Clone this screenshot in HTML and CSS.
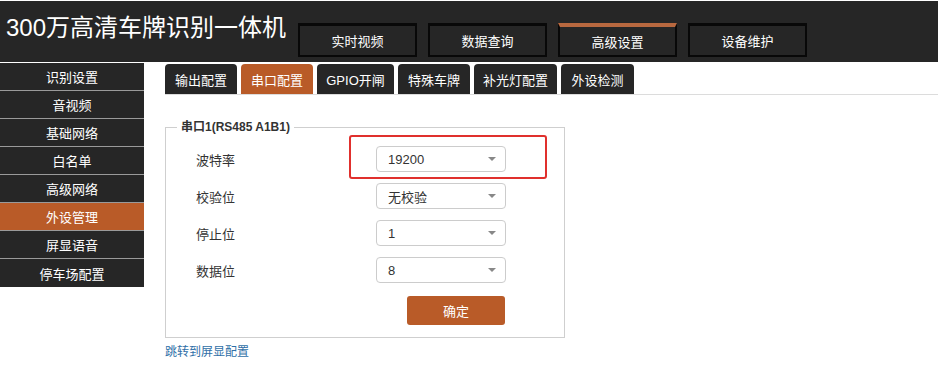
FILE: index.html
```html
<!DOCTYPE html>
<html lang="zh">
<head>
<meta charset="utf-8">
<title>300万高清车牌识别一体机</title>
<link rel="stylesheet" href="styles.css">
</head>
<body>
<header class="topbar">
  <h1 class="title">300万高清车牌识别一体机</h1>
  <nav class="mainnav">
    <a class="navbtn">实时视频</a>
    <a class="navbtn">数据查询</a>
    <a class="navbtn active">高级设置</a>
    <a class="navbtn">设备维护</a>
  </nav>
</header>
<div class="main">
  <aside class="sidebar">
    <a class="sideitem">识别设置</a>
    <a class="sideitem">音视频</a>
    <a class="sideitem">基础网络</a>
    <a class="sideitem">白名单</a>
    <a class="sideitem">高级网络</a>
    <a class="sideitem active">外设管理</a>
    <a class="sideitem">屏显语音</a>
    <a class="sideitem">停车场配置</a>
  </aside>
  <section class="content">
    <div class="tabs">
      <a class="tab w72">输出配置</a>
      <a class="tab w72 active">串口配置</a>
      <a class="tab w77">GPIO开闸</a>
      <a class="tab w72">特殊车牌</a>
      <a class="tab w83">补光灯配置</a>
      <a class="tab w73">外设检测</a>
    </div>
    <fieldset class="panel">
      <legend class="legend">串口1(RS485 A1B1)</legend>
      <div class="rows">
        <div class="row">
          <span class="label">波特率</span>
          <div class="select"><span>19200</span><i class="caret"></i></div>
        </div>
        <div class="row">
          <span class="label">校验位</span>
          <div class="select"><span>无校验</span><i class="caret"></i></div>
        </div>
        <div class="row">
          <span class="label">停止位</span>
          <div class="select"><span>1</span><i class="caret"></i></div>
        </div>
        <div class="row">
          <span class="label">数据位</span>
          <div class="select"><span>8</span><i class="caret"></i></div>
        </div>
        <div class="btnrow"><button class="okbtn">确定</button></div>
      </div>
      <div class="highlight"></div>
    </fieldset>
    <a class="link">跳转到屏显配置</a>
  </section>
</div>
</body>
</html>
```
FILE: styles.css
```css
* { box-sizing: border-box; }
html, body { margin: 0; padding: 0; background: #fff; }
body {
  padding-top: 1px;
  font-family: "Liberation Sans", "Noto Sans CJK SC", sans-serif;
  font-size: 13px;
  color: #333;
}
a { text-decoration: none; cursor: pointer; }

.topbar {
  height: 61px;
  background: #262626;
  display: flex;
  align-items: flex-start;
  padding-left: 6px;
}
.title {
  margin: 15px 0 0 0;
  font-size: 24px;
  line-height: 24px;
  font-weight: normal;
  color: #fff;
  white-space: nowrap;
}
.mainnav {
  display: flex;
  gap: 11px;
  margin: 22px 0 0 12px;
}
.navbtn {
  width: 119px;
  height: 34px;
  border: 2px solid #080808;
  border-top-width: 3px;
  background: #262626;
  color: #fff;
  display: flex;
  align-items: center;
  justify-content: center;
  font-size: 13px;
}
.navbtn.active { border-top: 4px solid #b8683f; }

.main {
  display: flex;
  align-items: flex-start;
  margin-top: 1px;
}
.sidebar {
  width: 144px;
  flex: none;
  display: flex;
  flex-direction: column;
  background: #262626;
}
.sideitem {
  height: 28px;
  border-bottom: 1px solid #9a9a9a;
  color: #fff;
  display: flex;
  align-items: center;
  justify-content: center;
  font-size: 13px;
}
.sideitem:last-child { border-bottom: none; }
.sideitem.active { background: #b95b28; }

.content {
  flex: 1;
  padding-left: 21px;
  padding-top: 1px;
}
.tabs {
  display: flex;
  gap: 4px;
  border-bottom: 1px solid #dcdcdc;
  height: 31px;
}
.tab {
  height: 30px;
  background: #262626;
  color: #fff;
  border-radius: 4px 4px 0 0;
  display: flex;
  align-items: center;
  justify-content: center;
  font-size: 13px;
}
.tab.active { background: #b95b28; }
.w72 { width: 72px; }
.w73 { width: 73px; }
.w77 { width: 77px; }
.w83 { width: 83px; }

.panel {
  position: relative;
  width: 400px;
  margin: 25px 0 0 0;
  padding: 0 0 12px 0;
  border: 1px solid #cfcfcf;
}
.legend {
  margin-left: 11px;
  padding: 0 4px;
  font-size: 12px;
  line-height: 14px;
  font-weight: bold;
  color: #333;
}
.rows {
  display: flex;
  flex-direction: column;
  gap: 11px;
  padding: 12px 0 0 30px;
}
.row {
  display: flex;
  align-items: center;
  height: 26px;
}
.label {
  width: 180px;
  font-size: 13px;
  color: #333;
}
.select {
  width: 130px;
  height: 26px;
  border: 1px solid #cccccc;
  border-radius: 4px;
  display: flex;
  align-items: center;
  justify-content: space-between;
  padding: 0 9px 0 11px;
  font-size: 13px;
  color: #333;
  background: #fff;
}
.caret {
  width: 0;
  height: 0;
  border-left: 4px solid transparent;
  border-right: 4px solid transparent;
  border-top: 4px solid #888;
}
.btnrow {
  padding-left: 211px;
  margin-top: 2px;
}
.okbtn {
  width: 98px;
  height: 29px;
  border: none;
  border-radius: 3px;
  background: #b95b28;
  color: #fff;
  font-family: inherit;
  font-size: 13px;
  padding: 0;
}
.highlight {
  position: absolute;
  left: 183px;
  top: 1px;
  width: 198px;
  height: 44px;
  border: 2px solid #e0302d;
  border-radius: 3px;
}
.link {
  display: block;
  margin-top: 7px;
  font-size: 12px;
  line-height: 14px;
  color: #2f6fa7;
}
```
